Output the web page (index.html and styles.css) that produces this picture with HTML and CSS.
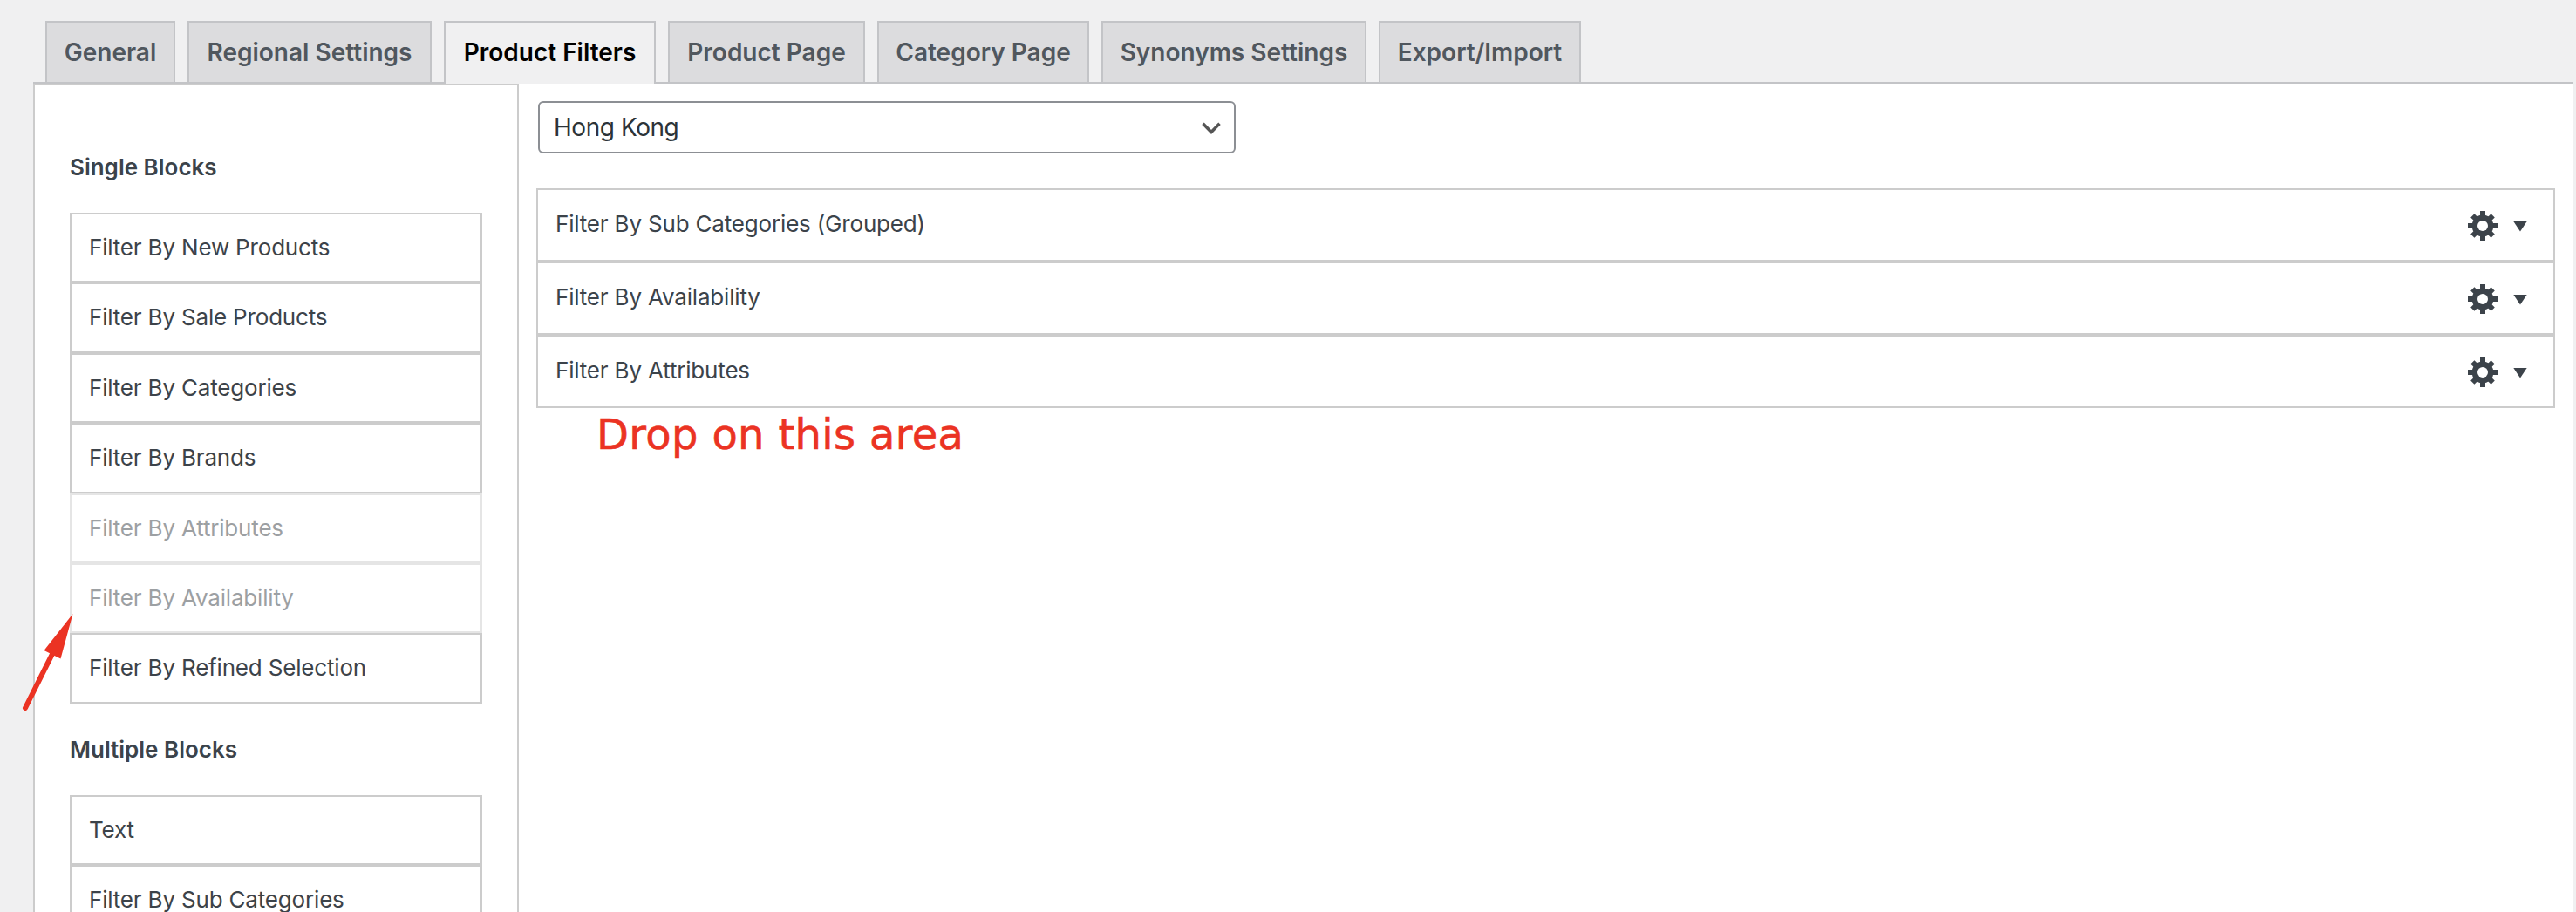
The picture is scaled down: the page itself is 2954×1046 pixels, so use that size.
FILE: index.html
```html
<!DOCTYPE html>
<html lang="en">
<head>
<meta charset="utf-8">
<title>Product Filters</title>
<link rel="stylesheet" href="styles.css">
</head>
<body>
<svg class="symbols" aria-hidden="true">
  <symbol id="gear" viewBox="0 0 34 34">
    <g fill="currentColor">
      <path d="M14 0h6v34h-6z"/>
      <path d="M0 14h34v6H0z"/>
      <path d="M14 .5h6v33h-6z" transform="rotate(45 17 17)"/>
      <path d="M14 .5h6v33h-6z" transform="rotate(-45 17 17)"/>
      <circle cx="17" cy="17" r="12.400"/>
    </g>
    <circle cx="17" cy="17" r="6" fill="#fff"/>
  </symbol>
</svg>
<nav class="tabs">
  <a class="tab general">General</a>
  <a class="tab regional">Regional Settings</a>
  <a class="tab filters active">Product Filters</a>
  <a class="tab product">Product Page</a>
  <a class="tab category">Category Page</a>
  <a class="tab synonyms">Synonyms Settings</a>
  <a class="tab export">Export/Import</a>
</nav>
<main class="content">
  <aside class="sidebar">
    <h4 class="title">Single Blocks</h4>
    <ul class="blocks">
      <li class="block">Filter By New Products</li>
      <li class="block">Filter By Sale Products</li>
      <li class="block">Filter By Categories</li>
      <li class="block">Filter By Brands</li>
      <li class="block disabled">Filter By Attributes</li>
      <li class="block disabled">Filter By Availability</li>
      <li class="block">Filter By Refined Selection</li>
    </ul>
    <h4 class="title second">Multiple Blocks</h4>
    <ul class="blocks">
      <li class="block">Text</li>
      <li class="block">Filter By Sub Categories</li>
    </ul>
  </aside>
  <section class="panel">
    <div class="select"><span>Hong Kong</span>
      <svg class="chevron" width="22" height="15" viewBox="0 0 22 15"><path d="M1.500 1.800L11 11.500L20.500 1.800" fill="none" stroke="#555" stroke-width="3.500"/></svg>
    </div>
    <ul class="rows">
      <li class="row"><span>Filter By Sub Categories (Grouped)</span><svg class="gear"><use href="#gear"/></svg><i class="caret"></i></li>
      <li class="row"><span>Filter By Availability</span><svg class="gear"><use href="#gear"/></svg><i class="caret"></i></li>
      <li class="row"><span>Filter By Attributes</span><svg class="gear"><use href="#gear"/></svg><i class="caret"></i></li>
    </ul>
    <p class="hint">Drop on this area</p>
  </section>
</main>
<svg class="arrow" width="70" height="120" viewBox="0 0 70 120"><path d="M9 112L41 48" stroke="#eb3323" stroke-width="6" stroke-linecap="round"/><path d="M63.500 4L30.500 46L49.500 55.500Z" fill="#eb3323"/></svg>
</body>
</html>
```
FILE: styles.css
```css
* { box-sizing: border-box; }
body {
  margin: 0;
  height: 1046px;
  overflow: hidden;
  display: flex;
  flex-direction: column;
  background: #f0f0f1;
  color: #3c434a;
  font: 26px/36.4px Inter, "Liberation Sans", sans-serif;
}
ul { list-style: none; margin: 0; padding: 0; }
.symbols { position: absolute; width: 0; height: 0; }
.tabs {
  display: flex;
  gap: 14px;
  height: 96px;
  margin: 0 4px 0 38px;
  padding: 24px 0 0 14px;
  border-bottom: 2px solid #c3c4c7;
  flex: none;
}
.tab {
  height: 70px;
  padding: 10px 0;
  border: 2px solid #c3c4c7;
  border-bottom: 0;
  background: #dcdcde;
  color: #50575e;
  font-size: 28px;
  font-weight: 600;
  line-height: 48px;
  text-align: center;
  white-space: nowrap;
}
.active {
  height: 72px;
  background: #f0f0f1;
  color: #000;
}
.general { width: 149px; }
.regional { width: 280px; }
.filters { width: 243px; }
.product { width: 226px; }
.category { width: 243px; }
.synonyms { width: 304px; }
.export { width: 232px; }
.content {
  flex: 1;
  min-height: 0;
  overflow: hidden;
  display: flex;
  margin: 0 4px 0 38px;
  background: #fff;
}
.sidebar {
  width: 557px;
  flex: none;
  padding: 76.400px 40px 0;
  border: 2px solid #ccc;
  border-bottom: 0;
  overflow: hidden;
}
.title {
  margin: 0;
  height: 69.600px;
  font-size: 26px;
  font-weight: 600;
}
.second { margin-top: 35.600px; }
.block {
  height: 80.400px;
  padding: 20px;
  border: 2px solid #ccc;
  letter-spacing: -.18px;
  white-space: nowrap;
}
.disabled { opacity: .5; }
.panel { flex: 1; padding: 20px 20px 0; }
.select {
  display: flex;
  align-items: center;
  justify-content: space-between;
  width: 800px;
  height: 60px;
  margin-left: 2px;
  padding: 0 15px 0 16px;
  border: 2px solid #8c8f94;
  border-radius: 6px;
  color: #2c3338;
  font-size: 28px;
  letter-spacing: -.45px;
}
.chevron { margin-top: 3px; }
.rows { margin-top: 40px; }
.row {
  display: flex;
  align-items: center;
  height: 84px;
  padding: 0 30px 0 20px;
  border: 2px solid #ccc;
}
.row span { flex: 1; margin-top: -2px; letter-spacing: -.18px; }
.gear { width: 34px; height: 34px; margin-top: 2px; }
.caret {
  width: 16px;
  height: 12px;
  margin: 3px 0 0 18px;
  background: #3c434a;
  clip-path: polygon(0 0, 100% 0, 50% 100%);
}
.hint {
  margin: 0;
  padding: 1px 0 0 69px;
  color: #eb3323;
  font: 48px/58px "DejaVu Sans", sans-serif;
  letter-spacing: .33px;
  -webkit-text-stroke: .6px #eb3323;
}
.arrow { position: absolute; left: 20px; top: 700px; }
```
